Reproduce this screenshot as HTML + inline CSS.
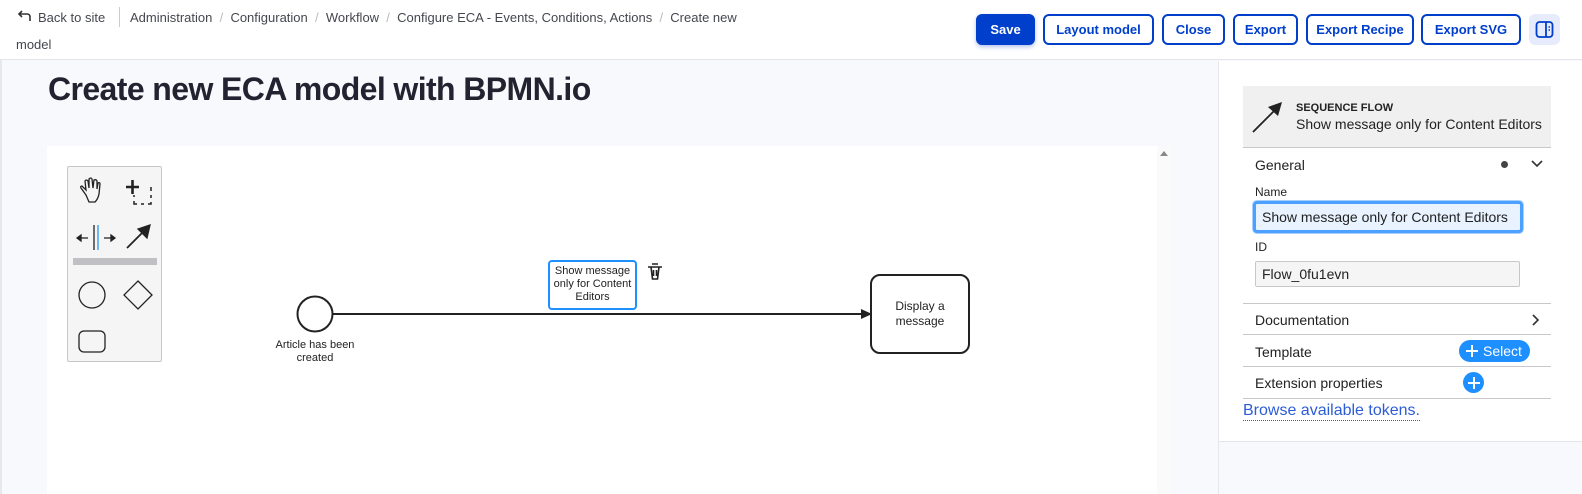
<!DOCTYPE html>
<html><head><meta charset="utf-8"><style>
*{box-sizing:border-box;margin:0;padding:0}
body{width:1582px;height:494px;overflow:hidden;background:#f8f9fc;font-family:"Liberation Sans",sans-serif;position:relative;color:#222330}
.abs{position:absolute}
.hdr{left:0;top:0;width:1582px;height:60px;background:#fff;border-bottom:1px solid #e4e5ea}
.bc{font-size:13px;color:#45474f}
.btn{position:absolute;top:14px;height:31px;border:2px solid #003ecc;border-radius:6px;background:#fff;color:#003ecc;font-weight:bold;font-size:13px;display:flex;align-items:center;justify-content:center}
.lbl{font-size:14px;color:#222}
.row{position:absolute;left:1243px;width:308px;border-top:1px solid #c8c8cc}
</style></head><body>
<div class="abs" style="left:0;top:60px;width:2px;height:434px;background:#e6e8ea"></div>
<div class="abs hdr"></div>
<svg class="abs" style="left:17px;top:8px" width="16" height="16" viewBox="0 0 16 16"><path d="M5 3 L2 6 L5 9 M2 6 H10 Q13 6 13 9 V13" fill="none" stroke="#333" stroke-width="1.6"/></svg>
<div class="abs bc" style="left:38px;top:10px">Back to site</div>
<div class="abs" style="left:119px;top:7px;width:1px;height:20px;background:#ccc"></div>
<div class="abs bc" style="left:130px;top:10px">Administration <span style="color:#bbb">&nbsp;/&nbsp;</span> Configuration <span style="color:#bbb">&nbsp;/&nbsp;</span> Workflow <span style="color:#bbb">&nbsp;/&nbsp;</span> Configure ECA - Events, Conditions, Actions <span style="color:#bbb">&nbsp;/&nbsp;</span> Create new</div>
<div class="abs bc" style="left:16px;top:37px">model</div>
<div class="btn" style="left:976px;width:59px;background:#003ecc;color:#fff;box-shadow:0 2px 4px rgba(0,60,200,.3)">Save</div>
<div class="btn" style="left:1043px;width:111px">Layout model</div>
<div class="btn" style="left:1162px;width:63px">Close</div>
<div class="btn" style="left:1233px;width:65px">Export</div>
<div class="btn" style="left:1306px;width:108px">Export Recipe</div>
<div class="btn" style="left:1421px;width:100px">Export SVG</div>
<div class="abs" style="left:1529px;top:14px;width:31px;height:31px;background:#e6ecfb;border-radius:6px"></div>
<svg class="abs" style="left:1535px;top:20px" width="19" height="19" viewBox="0 0 19 19"><rect x="1.5" y="2" width="16" height="15" rx="3" fill="none" stroke="#003ecc" stroke-width="1.8"/><line x1="11" y1="2" x2="11" y2="17" stroke="#003ecc" stroke-width="1.8"/><line x1="13.5" y1="7" x2="15" y2="7" stroke="#003ecc" stroke-width="1.5"/><line x1="13.5" y1="10" x2="15" y2="10" stroke="#003ecc" stroke-width="1.5"/></svg>
<div class="abs" style="left:48px;top:71px;font-size:32px;font-weight:bold;color:#222330;letter-spacing:-0.6px">Create new ECA model with BPMN.io</div>
<!-- canvas -->
<div class="abs" style="left:47px;top:146px;width:1110px;height:348px;background:#fff"></div>
<div class="abs" style="left:1157px;top:146px;width:15px;height:348px;background:#fafafa"></div>
<div class="abs" style="left:1160px;top:151px;width:0;height:0;border-left:4px solid transparent;border-right:4px solid transparent;border-bottom:5px solid #888"></div>
<!-- palette -->
<div class="abs" style="left:67px;top:166px;width:95px;height:196px;background:#f5f5f5;border:1px solid #c8c8c8;border-radius:2px"></div>
<svg class="abs" style="left:67px;top:166px" width="95" height="196" viewBox="0 0 95 196" fill="none" stroke="#222" stroke-width="1.3">
<path d="M19 29 L14 22 Q13 20 15 20 L19 24 L18 15 Q19 13 21 15 L22 22 L22 13 Q24 11 25 13 L26 22 L27 14 Q29 13 30 15 L30 23 L31 17 Q33 16 33 18 L32 28 Q31 33 28 36 L22 36 Z"/>
<path d="M59 21 H72 M65.5 14 V28" stroke-width="2.6"/>
<path d="M70 21 h2 M84 21 v4 M84 29 v3 M84 36 v2 h-3 M77 38 h-3 M70 38 h-3 v-3 M67 31 v-2" stroke-width="1.5"/>
<line x1="27" y1="59" x2="27" y2="84"/><line x1="31" y1="59" x2="31" y2="84" stroke="#2196f3"/>
<path d="M12 72 H21 M37 72 H45" stroke-width="1.3"/><path d="M10 72 l4-3 v6z M48 72 l-4-3 v6z" fill="#222"/>
<line x1="60" y1="82" x2="76" y2="66" stroke-width="1.8"/><path d="M83 59 L80 72 L71 63 Z" fill="#222"/>
<rect x="6" y="92" width="84" height="7" fill="#c0c0c4" stroke="none"/>
<circle cx="25" cy="129" r="13"/><path d="M71 115 L85 129 L71 143 L57 129 Z"/>
<rect x="12" y="165" width="26" height="21" rx="5"/>
</svg>
<!-- diagram -->
<svg class="abs" style="left:0;top:0" width="1200" height="494" fill="none">
<circle cx="315" cy="314" r="17.5" stroke="#222" stroke-width="2"/>
<line x1="333" y1="314" x2="862" y2="314" stroke="#222" stroke-width="2"/>
<path d="M872 314 L861 309 L861 319 Z" fill="#222"/>
<rect x="871" y="275" width="98" height="78" rx="9" stroke="#222" stroke-width="2"/>
<rect x="549" y="261" width="87" height="48" rx="3" stroke="#1e90ff" stroke-width="2"/>
<path d="M648 267 H662 M651 267 L652.5 279 H657.5 L659 267 M653.5 270 v6 M656.5 270 v6 M652 264 H658" stroke="#222" stroke-width="1.6"/>
</svg>
<div class="abs" style="left:549px;top:265px;width:87px;text-align:center;font-size:11px;line-height:13px;color:#222">Show message only for Content Editors</div>
<div class="abs" style="left:265px;top:339px;width:100px;text-align:center;font-size:11px;line-height:13px;color:#222">Article has been created</div>
<div class="abs" style="left:871px;top:299px;width:98px;text-align:center;font-size:12px;line-height:15px;color:#222">Display a message</div>
<!-- right panel -->
<div class="abs" style="left:1218px;top:61px;width:364px;height:433px;background:#f8f9fc;border-left:1px solid #e6e8ea"></div>
<div class="abs" style="left:1219px;top:61px;width:363px;height:381px;background:#fff;border-bottom:1px solid #e4e5ea"></div>
<div class="abs" style="left:1243px;top:86px;width:308px;height:62px;background:#f0f0f1;border-bottom:1px solid #c8c8cc"></div>
<svg class="abs" style="left:1250px;top:99px" width="36" height="36" viewBox="0 0 36 36"><line x1="3" y1="33" x2="25" y2="11" stroke="#222" stroke-width="1.8"/><path d="M32 3 L28 17 L18 8 Z" fill="#222"/></svg>
<div class="abs" style="left:1296px;top:102px;font-size:11px;font-weight:bold;color:#222">SEQUENCE FLOW</div>
<div class="abs" style="left:1296px;top:116px;font-size:14px;color:#222">Show message only for Content Editors</div>
<div class="abs lbl" style="left:1255px;top:157px">General</div>
<div class="abs" style="left:1501px;top:161px;width:7px;height:7px;border-radius:50%;background:#444"></div>
<svg class="abs" style="left:1530px;top:159px" width="14" height="10"><path d="M2 2 L7 7 L12 2" fill="none" stroke="#333" stroke-width="1.6"/></svg>
<div class="abs" style="left:1255px;top:185px;font-size:12px;color:#222">Name</div>
<div class="abs" style="left:1253px;top:201px;width:270px;height:32px;border:3px solid #4ca0ff;border-radius:4px;background:#e8f3ff;box-shadow:0 0 0 1px #a8d0ff"></div>
<div class="abs" style="left:1262px;top:209px;font-size:14px;color:#222">Show message only for Content Editors</div>
<div class="abs" style="left:1255px;top:240px;font-size:12px;color:#222">ID</div>
<div class="abs" style="left:1255px;top:261px;width:265px;height:26px;border:1px solid #c8c8cc;border-radius:2px;background:#f5f5f5"></div>
<div class="abs" style="left:1262px;top:266px;font-size:14px;color:#222">Flow_0fu1evn</div>
<div class="row" style="top:303px"></div>
<div class="abs lbl" style="left:1255px;top:312px">Documentation</div>
<svg class="abs" style="left:1531px;top:313px" width="10" height="14"><path d="M2 2 L7 7 L2 12" fill="none" stroke="#333" stroke-width="1.6"/></svg>
<div class="row" style="top:334px"></div>
<div class="abs lbl" style="left:1255px;top:344px">Template</div>
<div class="abs" style="left:1459px;top:340px;width:71px;height:22px;border-radius:11px;background:#1e8fff;color:#fff;font-size:14px;line-height:22px;padding-left:24px">Select</div>
<svg class="abs" style="left:1465px;top:344px" width="14" height="14"><path d="M7 1 V13 M1 7 H13" stroke="#fff" stroke-width="2"/></svg>
<div class="row" style="top:366px"></div>
<div class="abs lbl" style="left:1255px;top:375px">Extension properties</div>
<div class="abs" style="left:1463px;top:372px;width:21px;height:21px;border-radius:50%;background:#1e8fff"></div>
<svg class="abs" style="left:1467px;top:376px" width="14" height="14"><path d="M7 1 V13 M1 7 H13" stroke="#fff" stroke-width="2"/></svg>
<div class="row" style="top:398px"></div>
<div class="abs" style="left:1243px;top:402px;font-size:16px;color:#2c5cd6;border-bottom:1px dotted #2c5cd6;line-height:18px">Browse available tokens.</div>
</body></html>
